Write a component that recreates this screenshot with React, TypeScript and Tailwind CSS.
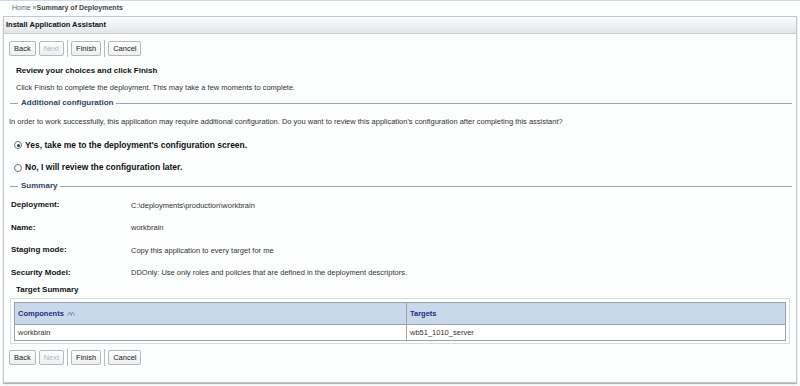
import React from 'react'

const font = { fontFamily: '"Liberation Sans", Arial, sans-serif' }

function Btn({ label, disabled }: { label: string; disabled?: boolean }) {
  return (
    <button
      className={
        'h-[15px] px-[4px] border border-[#b5b9bd] bg-gradient-to-b from-white to-[#eceef0] rounded-[2px] text-[7.5px] leading-none ' +
        (disabled ? 'text-[#b4b8bc]' : 'text-[#222]')
      }
    >
      {label}
    </button>
  )
}

function ButtonRow() {
  return (
    <div className="flex items-center">
      <Btn label="Back" />
      <div className="w-[3px]" />
      <Btn label="Next" disabled />
      <div className="w-[1px] h-[17px] bg-[#b8bcc0] mx-[3px]" />
      <Btn label="Finish" />
      <div className="w-[1px] h-[17px] bg-[#b8bcc0] mx-[3px]" />
      <Btn label="Cancel" />
    </div>
  )
}

function Section({ title }: { title: string }) {
  return (
    <div className="flex items-center h-[14px] ml-[6px] mr-[4px]">
      <div className="w-[8px] h-[1px] bg-[#97a5b8]" />
      <span className="px-[3px] text-[8px] font-bold text-[#2f4468]">{title}</span>
      <div className="flex-1 h-[1px] bg-[#97a5b8]" />
    </div>
  )
}

function Radio({ checked, label }: { checked?: boolean; label: string }) {
  return (
    <div className="flex items-center gap-[3px] ml-[10px]">
      <div className="w-[8px] h-[8px] rounded-full border border-[#6a7480] bg-white flex items-center justify-center">
        {checked && <div className="w-[3px] h-[3px] rounded-full bg-[#2b3a4a]" />}
      </div>
      <span className="text-[8.5px] font-bold text-[#111]">{label}</span>
    </div>
  )
}

const summary = [
  ['Deployment:', 'C:\\deployments\\production\\workbrain'],
  ['Name:', 'workbrain'],
  ['Staging mode:', 'Copy this application to every target for me'],
  ['Security Model:', 'DDOnly: Use only roles and policies that are defined in the deployment descriptors.'],
]

export default function App() {
  return (
    <div className="w-[800px] h-[386px] bg-[#fdfefe] text-[#222] overflow-hidden border-t border-[#cfdcec]" style={font}>
      {/* breadcrumb */}
      <div className="h-[15px] flex items-center pl-[12px] text-[7px] text-[#666]">
        Home »<span className="font-bold text-[#444]">Summary of Deployments</span>
      </div>

      <div className="mx-[3px] h-[367px] border border-[#c4c8cc] shadow-[0_1px_1px_#b0b4b8] bg-[#fdfefe]">
        <div className="h-[17px] flex items-center pl-[2px] bg-gradient-to-b from-[#fbfbfb] to-[#e3e6e9] border-b border-[#c8ccd0] text-[7.5px] font-bold text-[#111]">
          Install Application Assistant
        </div>

        <div className="pt-[6px] pl-[5px]">
          <ButtonRow />
        </div>

        <div className="h-[16px] mt-[6px] flex items-center pl-[12px] text-[8px] font-bold text-[#111]">
          Review your choices and click Finish
        </div>
        <div className="h-[17px] flex items-center pl-[12px] text-[7.5px] text-[#333]">
          Click Finish to complete the deployment. This may take a few moments to complete.
        </div>

        <Section title="Additional configuration" />

        <div className="h-[24px] flex items-center pl-[5px] text-[7.5px] text-[#333]">
          In order to work successfully, this application may require additional configuration. Do you want to review this application's configuration after completing this assistant?
        </div>
        <div className="h-[22px] flex items-center">
          <Radio checked label="Yes, take me to the deployment's configuration screen." />
        </div>
        <div className="h-[23px] flex items-center">
          <Radio label="No, I will review the configuration later." />
        </div>

        <Section title="Summary" />

        <div className="pt-[1px]">
          {summary.map(([k, v]) => (
            <div key={k} className="h-[22.5px] flex items-center pl-[7px]">
              <span className="w-[120px] text-[8px] font-bold text-[#111]">{k}</span>
              <span className="text-[7.5px] text-[#333]">{v}</span>
            </div>
          ))}
        </div>

        <div className="h-[12px] flex items-center pl-[12px] text-[8px] font-bold text-[#111]">Target Summary</div>

        <div className="mx-[6px] mt-[2px] border border-[#d8dcdf] p-[3px] pb-[2px]">
          <table className="w-full border-collapse border border-[#9aa3ad] text-[7.5px]">
            <thead>
              <tr className="bg-[#cad8ec] h-[22px]">
                <th className="w-[392px] text-left pl-[3px] font-bold text-[#1d2c80] border-r border-[#9aa3ad]">
                  <span className="inline-flex items-center gap-[3px]">
                    Components
                    <svg width="8" height="5" viewBox="0 0 8 5" fill="none" stroke="#7d8fb0" strokeWidth="1">
                      <path d="M0.5 4.5 L2.5 1 L4.5 4.5" />
                      <path d="M3.5 4.5 L5.5 1 L7.5 4.5" />
                    </svg>
                  </span>
                </th>
                <th className="text-left pl-[3px] font-bold text-[#1d2c80]">Targets</th>
              </tr>
            </thead>
            <tbody>
              <tr className="h-[16px] bg-white border-t border-[#9aa3ad]">
                <td className="pl-[3px] text-[#333] border-r border-[#9aa3ad]">workbrain</td>
                <td className="pl-[3px] text-[#333]">wb51_1010_server</td>
              </tr>
            </tbody>
          </table>
        </div>

        <div className="pt-[5px] pl-[5px]">
          <ButtonRow />
        </div>
      </div>
    </div>
  )
}
